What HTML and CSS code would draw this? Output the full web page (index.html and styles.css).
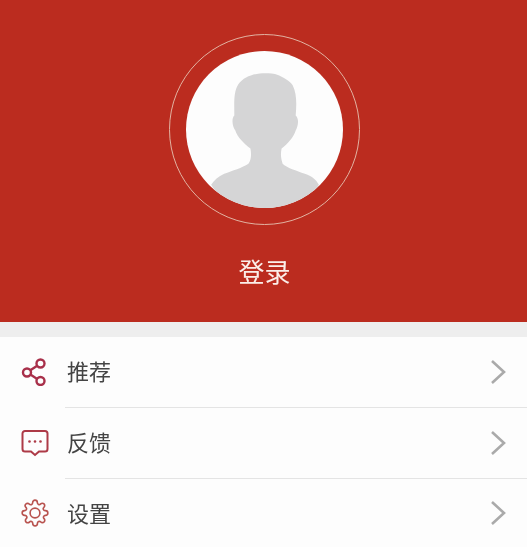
FILE: index.html
```html
<!DOCTYPE html>
<html lang="zh-CN">
<head>
<meta charset="utf-8">
<title>我的</title>
<link rel="stylesheet" href="styles.css">
</head>
<body>
<header class="hero">
  <div class="ring">
    <div class="avatar">
      <svg viewBox="0 0 156 156" width="157" height="157" aria-hidden="true">
        <path class="person" d="M79 22C69 22 58 25 52 33C47 41 48 52 48 64C45 67 46 75 49 79C51 86 58 92 64 97C65 102 65 108 62 112C56 116 46 119 38 122C32 125 28 128 25 133L40 156H118L132 133C129 127 124 124 118 122C110 119 100 116 96 112C94 106 94 102 95 97C101 92 107 86 109 79C111 75 113 68 109 64C110 52 110 42 106 34C103 29 96 26 92 24C87 22 83 22 79 22Z"/>
      </svg>
    </div>
  </div>
  <div class="login">登录</div>
</header>
<div class="band"></div>
<ul class="menu">
  <li class="row">
    <svg class="icon share" viewBox="0 0 28 28" width="28" height="28" aria-hidden="true">
      <circle cx="19.5" cy="5.5" r="4"/><circle cx="6" cy="14.5" r="4"/><circle cx="19.5" cy="23" r="4"/>
      <path d="M16.2 7.7L9.3 12.3M9.4 16.6L16.2 20.9"/>
    </svg>
    <div class="body"><span class="label">推荐</span>
      <svg class="chev" viewBox="0 0 16 26" width="16" height="26" aria-hidden="true"><path d="M2 2L14 13L2 24"/></svg>
    </div>
  </li>
  <li class="row">
    <svg class="icon" viewBox="0 0 28 28" width="28" height="28" aria-hidden="true">
      <path d="M4 2H24A2.500 2.500 0 0 1 26.500 4.500V20A2.500 2.500 0 0 1 24 22.500H18L14 26L10 22.500H4A2.500 2.500 0 0 1 1.500 20V4.500A2.500 2.500 0 0 1 4 2Z"/>
      <circle class="dot" cx="8.500" cy="12.500" r="1.300"/><circle class="dot" cx="14" cy="12.500" r="1.300"/><circle class="dot" cx="19.500" cy="12.500" r="1.300"/>
    </svg>
    <div class="body"><span class="label">反馈</span>
      <svg class="chev" viewBox="0 0 16 26" width="16" height="26" aria-hidden="true"><path d="M2 2L14 13L2 24"/></svg>
    </div>
  </li>
  <li class="row">
    <svg class="icon gear" viewBox="0 0 24 24" width="28" height="28" aria-hidden="true">
      <circle cx="12" cy="12" r="4.200"/>
      <path d="M19.400 15a1.650 1.650 0 0 0 .33 1.820l.06.06a2 2 0 1 1-2.830 2.830l-.06-.06a1.650 1.650 0 0 0-2.820 1.170V21a2 2 0 0 1-4 0v-.09A1.650 1.650 0 0 0 7.260 19.740l-.06.06a2 2 0 1 1-2.830-2.830l.06-.06A1.650 1.650 0 0 0 3.260 14H3a2 2 0 0 1 0-4h.09A1.650 1.650 0 0 0 4.260 7.180l-.06-.06a2 2 0 1 1 2.830-2.830l.06.06A1.650 1.650 0 0 0 10 3.260V3a2 2 0 0 1 4 0v.09a1.650 1.650 0 0 0 2.820 1.170l.06-.06a2 2 0 1 1 2.830 2.830l-.06.06A1.650 1.650 0 0 0 20.820 10H21a2 2 0 0 1 0 4h-.09a1.650 1.650 0 0 0-1.510 1Z"/>
    </svg>
    <div class="body"><span class="label">设置</span>
      <svg class="chev" viewBox="0 0 16 26" width="16" height="26" aria-hidden="true"><path d="M2 2L14 13L2 24"/></svg>
    </div>
  </li>
</ul>
</body>
</html>
```
FILE: styles.css
```css
* { box-sizing: border-box; }
html, body { margin: 0; padding: 0; height: 100%; overflow: hidden; background: #fdfdfd; }
body { font-family: "Noto Sans CJK SC", "Noto Sans", sans-serif; }
.hero {
  height: 322px;
  background: #bb2c1f;
  display: flex;
  flex-direction: column;
  align-items: center;
  padding-top: 34px;
  padding-left: 2px;
}
.ring {
  width: 191px;
  height: 191px;
  border: 1px solid #e2b3a2;
  border-radius: 50%;
  display: flex;
  align-items: center;
  justify-content: center;
}
.avatar {
  width: 157px;
  height: 157px;
  border-radius: 50%;
  background: #fdfdfd;
  overflow: hidden;
}
.avatar svg { display: block; }
.person { fill: #d5d5d6; }
.login {
  margin-top: 27px;
  font-size: 26px;
  line-height: 38px;
  color: #fbeee9;
  filter: blur(.3px);
}
.band { height: 15px; background: #eeeeee; }
.menu { list-style: none; margin: 0; padding: 0; }
.row {
  height: 71px;
  display: flex;
  align-items: center;
  padding-left: 21px;
}
.row:last-child { height: 69px; }
.icon {
  flex: none;
  margin-bottom: 2px;
  fill: none;
  stroke: #ad3a47;
  stroke-width: 2;
  filter: blur(.3px);
}
.share { stroke-width: 2.400; stroke: #a8304a; }
.gear { stroke-width: 1.400; stroke: #b8534f; }
.dot { fill: #ad3a47; stroke: none; }
.body {
  flex: 1;
  height: 100%;
  margin-left: 16px;
  padding-right: 21px;
  display: flex;
  align-items: center;
  justify-content: space-between;
  border-bottom: 1px solid #e4e4e4;
}
.row:last-child .body { border-bottom: none; }
.label {
  font-size: 22px;
  line-height: 32px;
  color: #444444;
  margin-left: 2px;
  margin-bottom: 4px;
  filter: blur(.3px);
}
.chev {
  margin-bottom: 1px;
  fill: none;
  stroke: #aaaaaa;
  stroke-width: 2.600;
  filter: blur(.3px);
}
```
